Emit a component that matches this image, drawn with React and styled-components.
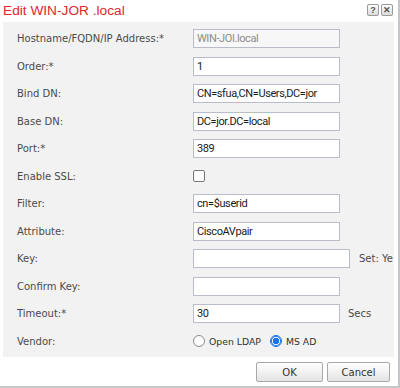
import React from "react";
import styled, { createGlobalStyle } from "styled-components";

const Global = createGlobalStyle`
  html, body { margin: 0; padding: 0; background: #fff; }
  * { box-sizing: border-box; }
`;

const Dialog = styled.div`
  width: 400px;
  height: 388px;
  background: #fff;
  border-right: 2px solid #c4c6ca;
  border-bottom: 2px solid #c4c6ca;
  display: flex;
  flex-direction: column;
  overflow: hidden;
  font-family: "DejaVu Sans", Verdana, sans-serif;
`;

const TitleBar = styled.div`
  height: 22px;
  display: flex;
  align-items: flex-start;
  justify-content: space-between;
  padding: 0 4px 0 3px;
`;

const Title = styled.h1`
  margin: 0;
  padding-top: 2px;
  font-family: "Liberation Sans", Arial, sans-serif;
  font-weight: normal;
  font-size: 13.7px;
  line-height: 18px;
  color: #e1252f;
`;

const TitleButtons = styled.div`
  display: flex;
  gap: 2px;
  padding-top: 4px;
  padding-right: 1px;
`;

const TitleButton = styled.div`
  width: 12px;
  height: 12px;
  border: 1px solid #9a9a9a;
  border-radius: 2px;
  background: linear-gradient(#fdfdfd, #dcdcdc);
  color: #555;
  font-family: "Liberation Sans", Arial, sans-serif;
  font-size: 9px;
  font-weight: bold;
  line-height: 10px;
  text-align: center;
`;

const Panel = styled.div`
  margin-left: 3px;
  width: 391px;
  height: 335px;
  background: #f2f2f2;
  padding: 3px 0 0 14px;
  display: grid;
  grid-template-columns: 176px 1fr;
  grid-auto-rows: 27.5px;
  overflow: hidden;
`;

const Label = styled.div`
  display: flex;
  align-items: center;
  font-size: 10px;
  color: #4a4a4a;
  white-space: nowrap;
`;

const Field = styled.div`
  display: flex;
  align-items: center;
  white-space: nowrap;
  font-size: 10px;
  color: #4a4a4a;
`;

const Input = styled.div`
  width: ${(p) => p.$w || 147}px;
  height: 19px;
  border: 1px solid #b9bdc9;
  background: ${(p) => (p.$disabled ? "#f7f7f7" : "#fff")};
  color: ${(p) => (p.$disabled ? "#8c8c8c" : "#1a1a1a")};
  font-family: Roboto, "Liberation Sans", sans-serif;
  font-size: 11px;
  letter-spacing: -0.4px;
  line-height: 18px;
  padding-left: 3px;
  flex-shrink: 0;
  overflow: hidden;
`;

const Suffix = styled.span`
  margin-left: ${(p) => p.$gap || 8}px;
  font-size: 10px;
  color: #4a4a4a;
`;

const Checkbox = styled.div`
  width: 12px;
  height: 12px;
  border: 1px solid #777;
  border-radius: 2px;
  background: #fff;
`;

const Radio = styled.span`
  width: 12px;
  height: 12px;
  border-radius: 50%;
  flex-shrink: 0;
  border: 1px solid ${(p) => (p.$on ? "#1a6fe3" : "#8a8a8a")};
  background: ${(p) =>
    p.$on ? "radial-gradient(circle, #1a73e8 0 3px, #fff 3.5px 100%)" : "#fff"};
  ${(p) => p.$on && "box-shadow: inset 0 0 0 1px #1a73e8;"}
`;

const RadioLabel = styled.span`
  margin-left: 4px;
  margin-right: 9px;
  font-size: 9.3px;
  color: #333;
`;

const Footer = styled.div`
  display: flex;
  justify-content: flex-end;
  gap: 4px;
  padding: 5px 8px 0 0;
`;

const Button = styled.div`
  width: ${(p) => p.$w}px;
  height: 20px;
  border: 1px solid #a9a9a9;
  border-radius: 2px;
  background: linear-gradient(#ffffff, #e4e4e4);
  font-size: 10px;
  color: #333;
  display: flex;
  align-items: center;
  justify-content: center;
`;

const rows = [
  { label: "Hostname/FQDN/IP Address:*", value: "WIN-JOI.local", disabled: true },
  { label: "Order:*", value: "1" },
  { label: "Bind DN:", value: "CN=sfua,CN=Users,DC=jor" },
  { label: "Base DN:", value: "DC=jor.DC=local" },
  { label: "Port:*", value: "389" },
  { label: "Enable SSL:", type: "check" },
  { label: "Filter:", value: "cn=$userid" },
  { label: "Attribute:", value: "CiscoAVpair" },
  { label: "Key:", value: "", w: 157, suffix: "Set: Ye", gap: 9 },
  { label: "Confirm Key:", value: "" },
  { label: "Timeout:*", value: "30", suffix: "Secs", gap: 8 },
  { label: "Vendor:", type: "radio" },
];

export default function App() {
  return (
    <>
      <Global />
      <Dialog>
        <TitleBar>
          <Title>Edit WIN-JOR .local</Title>
          <TitleButtons>
            <TitleButton>?</TitleButton>
            <TitleButton>✕</TitleButton>
          </TitleButtons>
        </TitleBar>
        <Panel>
          {rows.map((r) => (
            <React.Fragment key={r.label}>
              <Label>{r.label}</Label>
              <Field>
                {r.type === "check" ? (
                  <Checkbox />
                ) : r.type === "radio" ? (
                  <>
                    <Radio />
                    <RadioLabel>Open LDAP</RadioLabel>
                    <Radio $on />
                    <RadioLabel>MS AD</RadioLabel>
                  </>
                ) : (
                  <>
                    <Input $w={r.w} $disabled={r.disabled}>
                      {r.value}
                    </Input>
                    {r.suffix && <Suffix $gap={r.gap}>{r.suffix}</Suffix>}
                  </>
                )}
              </Field>
            </React.Fragment>
          ))}
        </Panel>
        <Footer>
          <Button $w={67}>OK</Button>
          <Button $w={63}>Cancel</Button>
        </Footer>
      </Dialog>
    </>
  );
}
